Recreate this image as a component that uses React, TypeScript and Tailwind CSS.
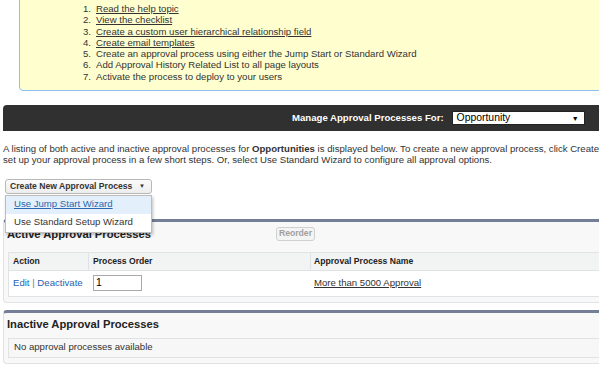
import React from "react";

const steps: { text: string; link: boolean }[] = [
  { text: "Read the help topic", link: true },
  { text: "View the checklist", link: true },
  { text: "Create a custom user hierarchical relationship field", link: true },
  { text: "Create email templates", link: true },
  { text: "Create an approval process using either the Jump Start or Standard Wizard", link: false },
  { text: "Add Approval History Related List to all page layouts", link: false },
  { text: "Activate the process to deploy to your users", link: false },
];

function PanelTitle({ children }: { children: React.ReactNode }) {
  return (
    <h2 className="text-[11.2px] leading-[14px] font-bold text-[#222]">{children}</h2>
  );
}

export default function App() {
  return (
    <div className="relative h-[386px] w-[599px] overflow-hidden bg-white font-['Liberation_Sans',Arial,sans-serif] text-[#333]">
      {/* getting started box */}
      <div className="-mt-[20px] -mr-[20px] ml-[19px] rounded-[4px] border border-[#8fc0ea] bg-[#fffecf] pt-[22px] pb-[8px] pl-[63px]">
        <ol className="text-[9.6px] leading-[11.3px]">
          {steps.map((s, i) => (
            <li key={i} className="flex whitespace-nowrap">
              <span className="w-[13px]">{i + 1}.</span>
              <span className={s.link ? "underline" : ""}>{s.text}</span>
            </li>
          ))}
        </ol>
      </div>

      {/* manage bar */}
      <div className="-mr-[20px] mt-[14px] ml-[3px] flex h-[26px] items-center rounded-tl-[4px] bg-[#303030] pl-[289px]">
        <span className="text-[9.6px] font-bold whitespace-nowrap text-white">
          Manage Approval Processes For:
        </span>
        <div className="ml-[8px] flex h-[14px] w-[133px] items-center justify-between border border-[#222] bg-white pr-[5px] pl-[4px]">
          <span className="text-[10.4px] leading-none text-black">Opportunity</span>
          <span className="text-[7px] leading-none text-black">▼</span>
        </div>
      </div>

      {/* description */}
      <div className="mt-[12px] ml-[3px] text-[9.6px] leading-[11.3px] whitespace-nowrap">
        <div>
          A listing of both active and inactive approval processes for <b>Opportunities</b> is
          displayed below. To create a new approval process, click Create New Approval Process and
          select Use Jump Start Wizard to
        </div>
        <div>
          set up your approval process in a few short steps. Or, select Use Standard Wizard to
          configure all approval options.
        </div>
      </div>

      {/* create button + menu */}
      <div className="relative mt-[13px] ml-[5px] w-[147px]">
        <div className="flex h-[15px] items-center justify-between rounded-[3px] border border-[#b8b8b8] bg-gradient-to-b from-[#fbfbfb] to-[#ededed] pr-[6px] pl-[4px]">
          <span className="text-[8.64px] font-bold whitespace-nowrap text-[#333]">
            Create New Approval Process
          </span>
          <span className="text-[6px] leading-none text-[#333]">▼</span>
        </div>
        <div className="absolute top-[16px] left-0 z-10 w-[147px] border border-[#bdbdbd] bg-white shadow-[1px_2px_3px_rgba(0,0,0,0.25)]">
          <div className="flex h-[18px] items-center bg-[#e3effa] pl-[8px] text-[9.6px] text-[#2a67b1] underline">
            Use Jump Start Wizard
          </div>
          <div className="flex h-[18px] items-center pl-[8px] text-[9.6px] text-[#333]">
            Use Standard Setup Wizard
          </div>
        </div>
      </div>

      {/* active processes */}
      <div className="-mr-[20px] mt-[25px] ml-[3px] rounded-[4px] border border-t-[3px] border-[#e0e3e5] border-t-[#747e96] bg-[#f8f8f8] pb-[5px]">
        <div className="flex items-center pt-[5px] pb-[11px] pl-[3px]">
          <div className="w-[269px]">
            <PanelTitle>Active Approval Processes</PanelTitle>
          </div>
          <div className="flex h-[14px] w-[39px] items-center justify-center rounded-[3px] border border-[#d0d0d0] bg-[#f4f4f4] text-[8.64px] font-bold text-[#a0a0a0]">
            Reorder
          </div>
        </div>
        <div className="ml-[4px] border border-[#e0e3e5] bg-white">
          <div className="flex h-[17px] items-center bg-[#f2f3f3] text-[8.64px] font-bold text-[#222]">
            <div className="flex h-full w-[80px] items-center border-r border-[#e0e3e5] pl-[4px]">Action</div>
            <div className="flex h-full w-[222px] items-center border-r border-[#e0e3e5] pl-[4px]">Process Order</div>
            <div className="pl-[3px]">Approval Process Name</div>
          </div>
          <div className="flex h-[26px] items-center border-t border-[#e0e3e5] text-[9.6px]">
            <div className="w-[80px] pl-[4px] text-[#1f5fb0]">
              Edit <span className="text-[#777]">|</span> Deactivate
            </div>
            <div className="w-[222px] pl-[4px]">
              <div className="flex h-[16px] w-[49px] items-center border border-[#a9a9a9] pl-[2px] text-[10.4px] text-black">
                1
              </div>
            </div>
            <div className="pl-[3px] underline">More than 5000 Approval</div>
          </div>
        </div>
      </div>

      {/* inactive processes */}
      <div className="-mr-[20px] mt-[7px] ml-[3px] rounded-[4px] border border-t-[3px] border-[#e0e3e5] border-t-[#747e96] bg-[#f8f8f8] pb-[5px]">
        <div className="pt-[4px] pb-[7px] pl-[3px]">
          <PanelTitle>Inactive Approval Processes</PanelTitle>
        </div>
        <div className="ml-[4px] flex h-[20px] items-center border border-[#e0e3e5] bg-[#f7f7f7] pl-[5px] text-[9.6px]">
          No approval processes available
        </div>
      </div>
    </div>
  );
}
